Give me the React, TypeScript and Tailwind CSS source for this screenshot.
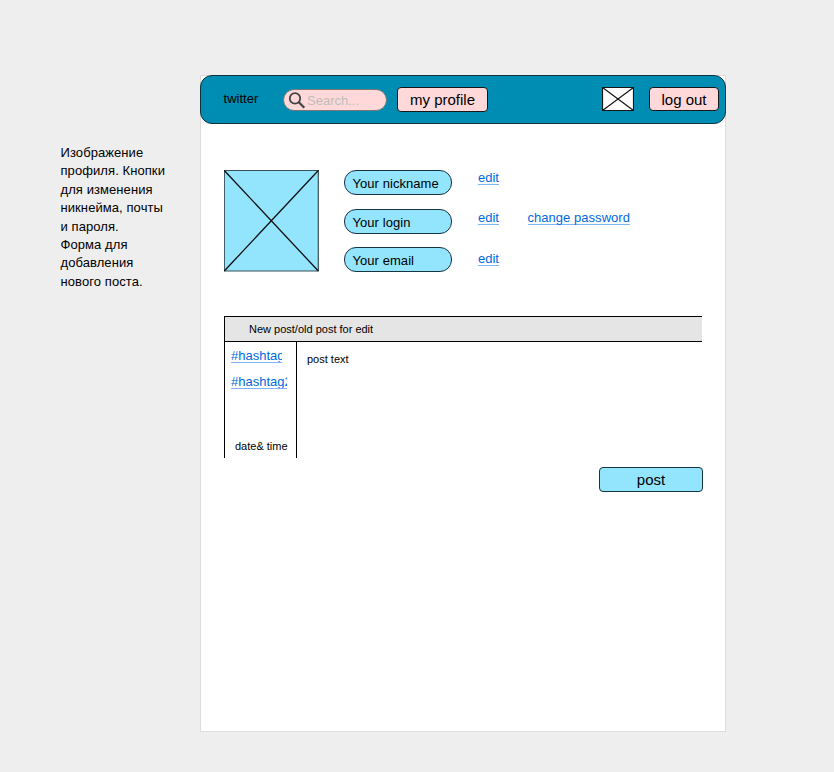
import React from "react";

const link =
  "block w-fit border-b border-[#7fb4f5] text-[13px] leading-[13px] text-[#0069e0]";

function Field({ label }: { label: string }) {
  return (
    <div className="h-[25px] w-[108px] rounded-[12px] border border-[#173540] bg-[#93e4fd] pl-[7.5px] pt-px text-[13px] leading-[24px] tracking-[0.06px] whitespace-nowrap">
      {label}
    </div>
  );
}

function Header() {
  return (
    <header className="-mx-px -mt-px flex h-[48.5px] w-[526px] items-start rounded-[12px] border border-[#12323d] bg-[#008db3] pl-[22px] pt-[11px]">
      <span className="mt-[3px] w-[60px] pl-[0.6px] text-[13px] leading-[18px]">twitter</span>
      <div className="mt-[2px] flex h-[22px] w-[104px] items-center rounded-full border border-[#777] bg-[#ffd9d9] pl-[4px]">
        <svg className="h-[18px] w-[19px] shrink-0" viewBox="0 0 19 18" fill="none" stroke="#444" strokeWidth="1.8">
          <circle cx="7" cy="7.4" r="5.2" />
          <path d="M10.8 11.2L16.3 16.7" strokeWidth="2.3" />
        </svg>
        <span className="pt-px text-[13px] leading-[20px] text-[#c0bcbc]">Search...</span>
      </div>
      <button className="ml-[10px] h-[25px] w-[91px] rounded-[4px] border border-[#171717] bg-[#ffd9d9] text-[15px] leading-[23px]">
        my profile
      </button>
      <svg className="ml-[114px] h-[24px] w-[32px]" viewBox="0 0 32 24" fill="white" stroke="#161616">
        <path d="M.5 .5H31.5V23.5H.5ZM.5 .5L31.5 23.5M31.5 .5L.5 23.5" strokeWidth="1.2" />
      </svg>
      <button className="ml-[15px] h-[24px] w-[70px] rounded-[4px] border border-[#171717] bg-[#ffd9d9] text-[15px] leading-[23px]">
        log out
      </button>
    </header>
  );
}

function Profile() {
  return (
    <section className="ml-[23px] mt-[46.5px] flex items-start">
      <svg className="h-[102px] w-[95px]" viewBox="0 0 95 102" fill="#93e4fd">
        <path d="M.3 .5H94.3V101H.3Z" stroke="#38505a" strokeWidth="1.2" />
        <path d="M.3 .5L94.3 101M94.3 .5L.3 101" stroke="#111" strokeWidth="1.3" />
      </svg>
      <div className="ml-[25px] flex flex-col gap-[13.5px]">
        <Field label="Your nickname" />
        <Field label="Your login" />
        <Field label="Your email" />
      </div>
      <div className="ml-[26px] mt-px flex w-[49.5px] flex-col">
        <a className={link}>edit</a>
        <a className={`${link} mt-[26px]`}>edit</a>
        <a className={`${link} mt-[27px]`}>edit</a>
      </div>
      <a className={`${link} mt-[41px] tracking-[0.04px]`}>change password</a>
    </section>
  );
}

function PostEditor() {
  return (
    <section className="ml-[23px] mt-[44px] w-[478px] border-l border-black">
      <div className="h-[26px] border-y border-black bg-[#e5e5e5] pl-[24px] text-[11px] leading-[25px]">
        New post/old post for edit
      </div>
      <div className="flex h-[116px]">
        <div className="flex w-[72px] flex-col border-r border-black pl-[6px]">
          <a className={`${link} mt-[7px] max-w-[51px] overflow-hidden`}>#hashtag1</a>
          <a className={`${link} mt-[12px] max-w-[56px] overflow-hidden`}>#hashtag2</a>
          <span className="ml-[4px] mt-[50px] text-[11px] leading-[14px] whitespace-nowrap">date&amp; time</span>
        </div>
        <p className="pl-[10px] pt-[10px] text-[11px] leading-[14px]">post text</p>
      </div>
    </section>
  );
}

export default function App() {
  return (
    <div className="flex h-[772px] w-[834px] items-start overflow-hidden bg-[#eeeeee] pt-[75px] font-['Liberation_Sans',Arial,sans-serif] text-black">
      <aside className="ml-[60px] mt-[69px] w-[140px] pl-[0.5px] text-[13px] leading-[18.4px] tracking-[0.08px] whitespace-nowrap">
        Изображение<br />профиля. Кнопки<br />для изменения<br />никнейма, почты<br />и пароля.<br />Форма для<br />добавления<br />нового поста.
      </aside>
      <main className="h-[657px] w-[526px] shrink-0 border border-[#dddddd] bg-white">
        <Header />
        <Profile />
        <PostEditor />
        <button className="ml-[398px] mt-[9px] block h-[25px] w-[104px] rounded-[4px] border border-[#173540] bg-[#93e4fd] text-[15px] leading-[24px]">
          post
        </button>
      </main>
    </div>
  );
}
